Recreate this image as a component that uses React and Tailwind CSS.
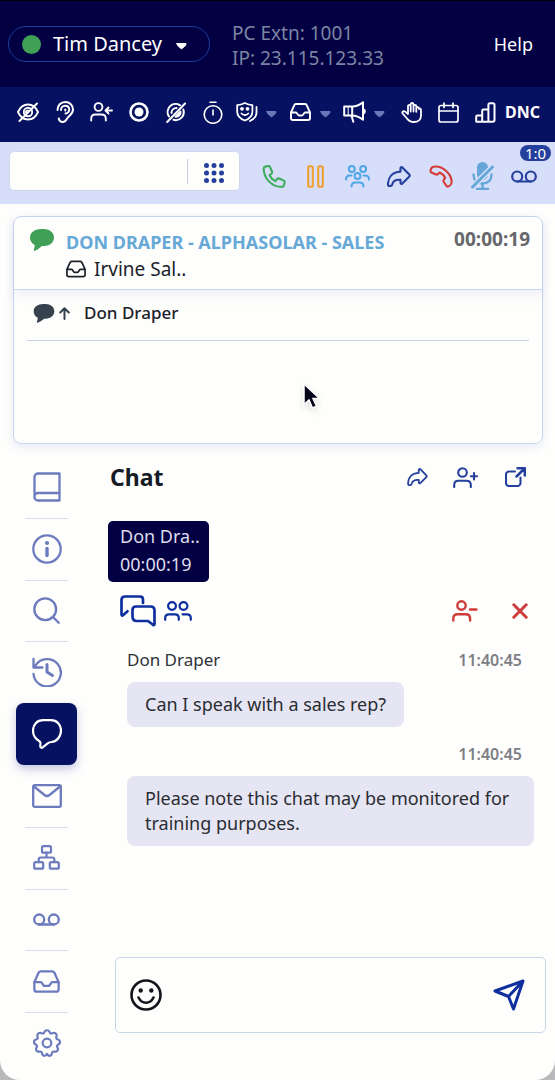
import { useState } from "react";

function Icone({ w, h, traco = 2, className = "", children }) {
  return (
    <svg
      width={w}
      height={h}
      viewBox={`0 0 ${w} ${h}`}
      fill="none"
      stroke="currentColor"
      strokeWidth={traco}
      strokeLinecap="round"
      strokeLinejoin="round"
      className={`shrink-0 ${className}`}
      aria-hidden="true"
    >
      {children}
    </svg>
  );
}

function Seta({ className }) {
  return (
    <Icone w={11} h={8} traco={1} className={className}>
      <path fill="currentColor" d="M1 1.500h9c.4 1.700-2.200 3.800-4.500 5.300C3.200 5.300.6 3.200 1 1.500z" />
    </Icone>
  );
}

function Inbox({ w = 21, h = 18, traco = 1.8 }) {
  return (
    <svg width={w} height={h} viewBox="0 0 21 18" fill="none" stroke="currentColor" strokeWidth={traco} strokeLinejoin="round" strokeLinecap="round" className="shrink-0" aria-hidden="true">
      <path d="M1 9.500v5.500a2 2 0 0 0 2 2h15a2 2 0 0 0 2-2V9.500L16.800 2.400A2 2 0 0 0 15 1H6a2 2 0 0 0-1.800 1.400z" />
      <path d="M1.200 9.500H6c1.200 0 1.500 3 3 3h3c1.500 0 1.800-3 3-3h4.800" />
    </svg>
  );
}

function Compartilhar({ w = 24, h = 21 }) {
  return (
    <svg width={w} height={h} viewBox="0 0 24 21" fill="none" stroke="currentColor" strokeWidth="2.1" strokeLinejoin="round" strokeLinecap="round" aria-hidden="true">
      <path d="M13.500 2.200c0-1 1-1.500 1.800-.8l7 7.200c.6.700.6 1.300 0 2l-7 7c-.8.700-1.800.2-1.800-.8v-3c-4.500-.3-7.500 1-8.200 4.500-.3 1.400-.8 1.700-2 1.700H2.500c-1 0-1.500-.4-1.500-1.500C1 11 5.500 6 13.500 5.600z" />
    </svg>
  );
}

function Correio({ w = 26, traco = 2.2 }) {
  return (
    <Icone w={w} h={13} traco={traco}>
      <circle cx="6.200" cy="6.500" r="5" />
      <circle cx={w - 6.2} cy="6.500" r="5" />
      <path d={`M6 11.500H${w - 6}`} />
    </Icone>
  );
}

const ferramentas = [
  {
    nome: "Hide",
    icone: (
      <Icone w={22} h={20} traco={1.9}>
        <path d="M1 10c2-4.500 5.500-7.500 10-7.500S19 5.500 21 10c-2 4.500-5.500 7.500-10 7.500S3 14.500 1 10z" />
        <circle cx="11" cy="10" r="4.200" />
        <path d="M9 10.500a2 2 0 0 1 2-2" />
        <path d="M2.500 19L20 1.500" />
      </Icone>
    ),
  },
  {
    nome: "Listen",
    icone: (
      <Icone w={18} h={22} traco={2}>
        <path d="M1.500 9C1.500 4.500 4.800 1 9.300 1S17 4.300 17 8.500c0 3-1.500 4.500-3.400 6.200-2 1.800-2.300 2.300-3.400 4.200-1 1.600-2.300 2.300-4 2.100-1.800-.2-3.200-1.500-3.400-3.500" />
        <path d="M5 9c0-2.500 1.800-4.300 4.200-4.300s4 1.600 4 3.900-1.700 3.900-3.700 3.900" />
        <path d="M9.300 8.600v.8" />
      </Icone>
    ),
  },
  {
    nome: "Join",
    icone: (
      <Icone w={23} h={20} traco={1.9}>
        <circle cx="8.500" cy="5" r="3.900" />
        <path d="M1.200 18.500v-1.800c0-2.700 1.600-4.200 4.300-4.200h6c2.700 0 4.300 1.500 4.300 4.200v1.800" />
        <path d="M22 8.500h-6M18.500 5.500l-3 3 3 3" />
      </Icone>
    ),
  },
  {
    nome: "Record",
    icone: (
      <Icone w={20} h={20} traco={2.6}>
        <circle cx="10" cy="10" r="8.500" />
        <circle cx="10" cy="10" r="4.500" fill="currentColor" stroke="none" />
      </Icone>
    ),
  },
  {
    nome: "Stop record",
    icone: (
      <Icone w={20} h={21} traco={2}>
        <path d="M3 14.500A8 8 0 0 1 14 3.300M17.300 7.500A8 8 0 0 1 7.500 17.800" />
        <path d="M14.500 9.500a4.500 4.500 0 0 1-5 5.200z" fill="currentColor" />
        <path d="M5.500 11a5 5 0 0 1 5-5" />
        <path d="M1.200 20L19 1.500" />
      </Icone>
    ),
  },
  {
    nome: "Timer",
    icone: (
      <Icone w={20} h={23} traco={1.6}>
        <circle cx="10" cy="13.500" r="8.800" />
        <path d="M7 1.200h6M10 9v5" />
      </Icone>
    ),
  },
];

const menus = [
  {
    nome: "Mask",
    icone: (
      <Icone w={22} h={20} traco={1.8}>
        <path d="M1.200 3.200C4 3 6.500 2.200 8.800 1c2.300 1.200 4.800 2 7.600 2.200v6.500c0 4.300-3 7-7.600 8.800-4.600-1.800-7.600-4.500-7.600-8.800z" />
        <circle cx="6" cy="6.800" r="1" fill="currentColor" />
        <circle cx="11.500" cy="6.800" r="1" fill="currentColor" />
        <path d="M5.500 11.500c1.800 2 5 2 6.800 0" />
        <path d="M20.500 5v5.500c0 3.500-2.500 6.500-6.500 8.500" />
      </Icone>
    ),
  },
  { nome: "Queues", icone: <Inbox w={21} h={18} traco={1.9} /> },
  {
    nome: "Campaigns",
    icone: (
      <Icone w={23} h={22} traco={2}>
        <path d="M1.200 5.500h8.300c4 0 7.500-2 10.500-4.300v17.600c-3-2.300-6.500-4.300-10.500-4.300H1.200zM9.200 5.500v9M8.500 14.800l1.800 6" />
        <path d="M5.200 5.500v9" strokeWidth="1" />
        <path d="M20.500 8.500c1.800.6 1.800 3.400 0 4z" fill="currentColor" />
      </Icone>
    ),
  },
];

const atalhos = [
  {
    nome: "Raise hand",
    icone: (
      <Icone w={21} h={21} traco={1.8}>
        <path d="M7 11V4.300c0-1.900 2.700-1.900 2.700 0V9.500M9.700 8V2.500c0-2 2.800-2 2.800 0v7M12.500 4.300c0-1.900 2.800-1.900 2.800 0v5.500M15.300 6.500c0-1.800 2.700-1.800 2.700 0v.5c.3-.8 2-.6 2 1v5.500c0 4-3 6.500-7 6.500-3.500 0-5.500-1.300-7-3.500l-4.300-5c-1.200-1.700 1-3.200 2.500-1.900L7 12V4.500" />
      </Icone>
    ),
  },
  {
    nome: "Calendar",
    icone: (
      <Icone w={21} h={21} traco={1.7}>
        <rect x="1" y="3.500" width="19" height="16.500" rx="2" />
        <path d="M1 9h19M6 1v4.500M15 1v4.500" />
      </Icone>
    ),
  },
  {
    nome: "Reports",
    icone: (
      <Icone w={21} h={21} traco={2}>
        <path d="M1.200 19.500v-4.800c0-.8.500-1.200 1.200-1.200h4.800v6.300H2c-.5 0-.8 0-.8-.3zM7.200 19.800V8.800c0-.8.500-1.300 1.200-1.300h5v12.300zM13.400 19.800V3c0-1 .6-1.700 1.600-1.700h2.800c1 0 1.700.7 1.700 1.700v15c0 1.200-.6 1.800-1.700 1.800z" />
      </Icone>
    ),
  },
];

const chamada = [
  {
    nome: "Answer",
    cor: "text-[#3fae5c]",
    icone: (
      <Icone w={24} h={23} traco={2.1}>
        <path d="M3.200 1.600L6 1c1-.2 1.600.2 2 1l2 4.500c.3.800.2 1.400-.4 2L7.500 10.200c1.300 2.700 3.200 4.600 5.900 5.900l1.700-2.100c.6-.7 1.200-.8 2-.5l4.500 2c.9.400 1.200 1 1 2l-.7 2.900c-.2 1-.8 1.500-1.800 1.500C10 21.900 1.700 14 1.700 3.400c0-1 .5-1.600 1.500-1.800z" />
      </Icone>
    ),
  },
  {
    nome: "Hold",
    cor: "text-[#f0a02e]",
    icone: (
      <Icone w={17} h={23} traco={2.1}>
        <rect x="1.200" y="1.200" width="4.600" height="20.600" rx="1.500" />
        <rect x="11.200" y="1.200" width="4.600" height="20.600" rx="1.500" />
      </Icone>
    ),
  },
  {
    nome: "Conference",
    cor: "text-[#4fa5e6]",
    icone: (
      <Icone w={25} h={23} traco={2}>
        <circle cx="6.800" cy="4" r="2.900" />
        <circle cx="18.200" cy="4" r="2.900" />
        <circle cx="12.500" cy="11" r="2.900" />
        <path d="M1 14.500c0-2.700 1.200-4 4-4h1.500M24 14.500c0-2.700-1.200-4-4-4h-1.500M6.500 21.500c0-2.700 1.300-4 4-4h4c2.700 0 4 1.300 4 4" />
      </Icone>
    ),
  },
  { nome: "Transfer", cor: "text-[#24409c]", icone: <Compartilhar /> },
  {
    nome: "Hang up",
    cor: "text-[#d43c36]",
    icone: (
      <Icone w={24} h={23} traco={2.1}>
        <path d="M1.500 5.500C1.800 3.500 2.500 2.400 4.500 1.800 13 .2 23 8.500 22.600 17.500c-.2 2-1.200 3.100-2.900 3.900-1 .5-1.800.2-2.400-.7l-2.500-3.700c-.5-.8-.5-1.500 0-2.200l1.400-2.100c-1.300-2.500-3-4.100-5.500-5.200L8.800 9.100c-.7.600-1.400.6-2.200.2L2.400 7.500c-.8-.4-1.100-1-.9-2z" />
      </Icone>
    ),
  },
  {
    nome: "Mute",
    cor: "text-[#67a6d8]",
    icone: (
      <Icone w={23} h={28} traco={2}>
        <rect x="7" y="1" width="9" height="16" rx="4.500" fill="currentColor" />
        <path d="M2.500 12.500c0 5.500 3.500 9 9 9s9-3.500 9-9M11.500 22v4.500M6 27h11" strokeWidth="2.400" />
        <path d="M1 25.500L22 4.500" stroke="#d6defa" strokeWidth="6" />
        <path d="M1.500 25L21.500 5" strokeWidth="3" />
      </Icone>
    ),
  },
  { nome: "Voicemail", cor: "text-[#24409c]", icone: <Correio />, aviso: "1:0" },
];

const secoes = [
  {
    nome: "Directory",
    icone: (
      <Icone w={28} h={30} traco={2.3}>
        <path d="M26.500 1.500H5A3.500 3.500 0 0 0 1.500 5v20A3.500 3.500 0 0 0 5 28.500h21.500zM26.500 21H5a3.500 3.500 0 0 0-3.500 3.500" />
      </Icone>
    ),
  },
  {
    nome: "Info",
    icone: (
      <Icone w={30} h={30} traco={2.3}>
        <circle cx="15" cy="15" r="13.700" />
        <path d="M15 14.500v7" strokeWidth="3.400" />
        <circle cx="15" cy="9" r="2.100" fill="currentColor" stroke="none" />
      </Icone>
    ),
  },
  {
    nome: "Search",
    icone: (
      <Icone w={27} h={27} traco={2.3}>
        <circle cx="12.200" cy="12.200" r="10.900" />
        <path d="M20 20l5.700 5.700" />
      </Icone>
    ),
  },
  {
    nome: "History",
    icone: (
      <Icone w={30} h={30} traco={2.3}>
        <path d="M1.500 17a13.700 13.700 0 1 0 2.200-8.800L1.500 10.500M1.500 2v8.500h9" />
        <path d="M15 7.500v7.500l5.500 3.500" strokeWidth="3" />
      </Icone>
    ),
  },
  {
    nome: "Chat",
    icone: (
      <Icone w={30} h={30} traco={2.2}>
        <path d="M11 1.200h8c6 0 10 4.500 10 10.300s-4 11-9.500 11.500c-1.500.1-2.500.3-3.500 1.200L11 28.200c-1.500 1.200-2.800.4-2.700-1.300l.2-2.700c0-1-.3-1.500-1.100-2C3.500 20 1 16.500 1 11.500 1 5.700 5 1.200 11 1.200z" />
      </Icone>
    ),
  },
  {
    nome: "Email",
    icone: (
      <Icone w={30} h={24} traco={2.3}>
        <rect x="1.200" y="1.200" width="27.600" height="21.600" rx="1.500" />
        <path d="M2 2.500L12.500 11c1.700 1.300 3.300 1.300 5 0L28 2.500" />
      </Icone>
    ),
  },
  {
    nome: "Flow",
    icone: (
      <Icone w={27} h={25} traco={2.2}>
        <rect x="9" y="1.200" width="9" height="6.500" rx="1.500" />
        <rect x="1.200" y="17.200" width="9" height="6.500" rx="1.500" />
        <rect x="16.800" y="17.200" width="9" height="6.500" rx="1.500" />
        <path d="M13.500 7.700v4.800M5.700 17.200v-2.700c0-1.300.7-2 2-2h11.600c1.300 0 2 .7 2 2v2.700" />
      </Icone>
    ),
  },
  { nome: "Voicemail", icone: <Correio w={27} traco={2.3} /> },
  { nome: "Inbox", icone: <Inbox w={27} h={23} traco={1.8} /> },
  {
    nome: "Settings",
    icone: (
      <Icone w={28} h={28} traco={2.2}>
        <circle cx="14" cy="14" r="4.300" />
        <path d="M11.500 2.800C12.300.7 15.700.7 16.500 2.800c.6 1.700 1.700 2.100 3.200 1.300 2.200-1.100 4.600 1.200 3.800 3.300-.6 1.600 0 2.700 1.500 3.100 2.400.7 2.700 3.800.4 4.900-1.500.7-1.800 1.900-.9 3.200 1.300 2-.5 4.500-2.800 4-1.700-.3-2.700.4-2.800 2-.2 2.300-3.200 3-4.400 1-.3-.9-.7-1-1-.1-1.200 2.100-4.200 1.400-4.400-.9-.1-1.600-1.100-2.300-2.800-2-2.300.5-4.100-2-2.800-4 .9-1.300.6-2.500-.9-3.200C.3 14.300.6 11.200 3 10.500c1.500-.4 2.100-1.500 1.500-3.100C3.700 5.300 6.100 3 8.300 4.100c1.500.8 2.600.4 3.200-1.300z" />
      </Icone>
    ),
  },
];

const mensagens = [
  { autor: "Don Draper", hora: "11:40:45", texto: "Can I speak with a sales rep?" },
  { autor: "", hora: "11:40:45", texto: "Please note this chat may be monitored for training purposes." },
];

function Balao({ w, h, className }) {
  return (
    <svg width={w} height={h} viewBox="0 0 24 22" fill="currentColor" className={`shrink-0 ${className}`} aria-hidden="true">
      <path d="M11 0h3c5.500 0 10 3.500 10 8.500S19.500 17 14 17h-2c-2 1.800-4.600 3.800-7.500 4.800-.8.200-1-.3-.8-.9.700-1.700.9-3 1-4.900C2 14.600 0 12 0 8.500 0 3.500 5 0 11 0z" />
    </svg>
  );
}

export default function App() {
  const [secao, setSecao] = useState("Chat");
  const [numero, setNumero] = useState("");
  const [texto, setTexto] = useState("");

  return (
    <div className="bg-[#b9b9bb]">
      <main className="min-h-screen flex flex-col bg-[#fefefd] rounded-b-[20px] overflow-hidden font-['Noto_Sans',sans-serif] text-[18px] text-[#1c212b]">
        <header className="h-[87px] border-t border-black bg-[#020042] flex items-center pl-2 pr-[22px]">
          <button className="h-9 w-[202px] flex items-center rounded-full border border-[#1f3c9a] px-[13px] text-white text-[20px]">
            <span className="w-[19px] h-[19px] rounded-full bg-[#40a156]"></span>
            <span className="ml-3">Tim Dancey</span>
            <Seta className="ml-[14px] mt-1" />
          </button>
          <div className="ml-[22px] pt-[3px] flex-1 text-[#7c84a3] text-[19px] leading-[25px]">
            <p>PC Extn: 1001</p>
            <p>IP: 23.115.123.33</p>
          </div>
          <a href="#help" className="text-white">Help</a>
        </header>

        <nav className="h-[55px] pb-[5px] bg-[#061161] text-white flex items-center pl-[9px] pr-[14px]">
          {ferramentas.map((f) => (
            <button key={f.nome} aria-label={f.nome} className="flex-[37] min-w-0 h-9 flex items-center justify-center">
              {f.icone}
            </button>
          ))}
          {menus.map((m) => (
            <button key={m.nome} aria-label={m.nome} className="flex-[54] min-w-0 h-9 flex items-center">
              <span className="w-[23px] ml-1 mr-2 flex justify-center">{m.icone}</span>
              <Seta className="text-[#6a77b8] mt-1" />
            </button>
          ))}
          {atalhos.map((a) => (
            <button key={a.nome} aria-label={a.nome} className="flex-[37] min-w-0 h-9 flex items-center justify-center">
              {a.icone}
            </button>
          ))}
          <button className="flex-[37] min-w-0 h-9 flex items-center justify-center font-['Liberation_Sans_Narrow','Noto_Sans',sans-serif] font-bold text-[16px]">
            DNC
          </button>
        </nav>

        <div className="h-[62px] bg-[#d6defa] flex items-start pt-2 pl-[9px] pr-[10px]">
          <div className="mt-px h-10 w-[231px] bg-[#fefefd] border border-[#cfd8ea] rounded-[5px] flex items-center">
            <input
              aria-label="Number"
              value={numero}
              onChange={(e) => setNumero(e.target.value)}
              className="flex-1 min-w-0 h-full px-3 outline-none"
            />
            <span className="w-px h-[25px] bg-[#c5cbe0]"></span>
            <button aria-label="Keypad" className="w-[51px] h-full pt-1 flex items-center justify-center text-[#24409c]">
              <svg width="20" height="20" viewBox="0 0 20 20" fill="currentColor" aria-hidden="true">
                {[2.5, 10, 17.5].map((y) => [2.5, 10, 17.5].map((x) => <circle key={`${x}-${y}`} cx={x} cy={y} r="2.500" />))}
              </svg>
            </button>
          </div>
          <div className="flex-1 flex ml-[13px]">
            {chamada.map((c) => (
              <button key={c.nome} aria-label={c.nome} className={`relative flex-1 h-[52px] flex items-center justify-center ${c.cor}`}>
                {c.icone}
                {c.aviso && (
                  <span className="absolute -top-[5px] -right-[6px] w-[31px] h-4 rounded-full bg-[#24409c] text-white text-[15px] leading-4 text-center">
                    {c.aviso}
                  </span>
                )}
              </button>
            ))}
          </div>
        </div>

        <section className="relative mt-3 mr-3 ml-[13px] h-[228px] border border-[#c9d6ef] rounded-lg shadow-[0_3px_10px_rgba(80,90,180,0.12)]">
          <div className="h-[73px] flex items-start pt-3 pl-4 pr-3 border-b border-[#c9d6ef] shadow-[0_6px_10px_rgba(80,90,180,0.08)]">
            <Balao w={24} h={22} className="text-[#40a156]" />
            <div className="flex-1 min-w-0 ml-3">
              <h2 className="font-bold text-[#66a8d6] leading-[26px] whitespace-nowrap">DON DRAPER - ALPHASOLAR - SALES</h2>
              <p className="flex items-center gap-2 text-[19px] leading-[28px]">
                <Inbox w={20} h={18} />
                Irvine Sal..
              </p>
            </div>
            <time className="font-bold text-[19px] leading-5 text-[#67676b]">00:00:19</time>
          </div>
          <div className="mx-[13px] h-[51px] pb-1 flex items-center border-b border-[#c6d0e6] pl-[6px]">
            <Balao w={22} h={19} className="text-[#36434f]" />
            <Icone w={11} h={13} traco={2} className="ml-1 text-[#36434f]">
              <path d="M5.500 12V1.500M1.200 5.500l4.300-4.300 4.300 4.300" />
            </Icone>
            <span className="ml-[14px] text-[17px] font-medium">Don Draper</span>
          </div>
          <svg width="20" height="30" viewBox="0 0 20 30" className="absolute left-[288px] top-[165px] drop-shadow-md" aria-hidden="true">
            <path d="M2 2v20.500l5-4.500 3.500 8 4-1.800-3.500-7.700h6.500z" fill="#05051a" stroke="#fff" strokeWidth="1.500" />
          </svg>
        </section>

        <div className="flex-1 flex pt-3">
          <nav className="w-[61px] ml-4 pb-[6px] flex flex-col">
            {secoes.map((s, i) => {
              const ativa = s.nome === secao;
              const proxima = secoes[i + 1];
              const linha = !ativa && proxima && proxima.nome !== secao;
              return (
                <button
                  key={s.nome}
                  aria-label={s.nome}
                  onClick={() => setSecao(s.nome)}
                  className={`relative flex-1 min-h-[52px] flex items-center justify-center ${
                    ativa ? "bg-[#061161] text-white rounded-lg shadow-[0_4px_10px_rgba(60,70,160,0.3)]" : "text-[#6c7bbd]"
                  }`}
                >
                  {s.icone}
                  {linha && <span className="absolute -bottom-px inset-x-[9px] h-px bg-[#d9def1]"></span>}
                </button>
              );
            })}
          </nav>

          <section className="flex-1 min-w-0 flex flex-col pl-[31px] pb-[47px]">
            <div className="flex items-center h-[42px] pl-[2px] pr-[29px] text-[#24409c]">
              <h1 className="flex-1 text-[23px] font-bold text-[#151a24]">Chat</h1>
              <button aria-label="Transfer chat">
                <Compartilhar w={21} h={18} />
              </button>
              <button aria-label="Add person" className="ml-[25px]">
                <Icone w={25} h={21} traco={2.1}>
                  <circle cx="9.500" cy="5.500" r="4.300" />
                  <path d="M1.200 20v-2c0-2.800 1.500-4.300 4.300-4.300h8c2.800 0 4.300 1.500 4.300 4.300v2M21 6v6.500M17.800 9.300H24" />
                </Icone>
              </button>
              <button aria-label="Open in window" className="ml-[27px]">
                <Icone w={21} h={20} traco={2.1}>
                  <path d="M10 4.500H4a3 3 0 0 0-3 3V16a3 3 0 0 0 3 3h8.500a3 3 0 0 0 3-3v-5.500" />
                  <path d="M12.500 1.200h7.300v7.300M19.500 1.500l-8 8" strokeWidth="2.500" />
                </Icone>
              </button>
            </div>

            <button className="mt-[23px] w-[101px] h-[61px] pb-[3px] rounded-[5px] bg-[#020042] text-[#dcdcea] text-left pl-3 leading-[28px] whitespace-nowrap">
              Don Dra..
              <br />
              00:00:19
            </button>

            <div className="mt-[11px] h-9 pl-3 pr-[27px] flex items-center text-[#0f2f9f]">
              <button aria-label="Conversation">
                <Icone w={36} h={32} traco={2.7}>
                  <path d="M23 8V4.500c0-2-1.200-3-3-3H5c-2.300 0-3.500 1.200-3.500 3.500v14.500c0 1 .8 1.300 1.500.7l4.500-4" />
                  <path d="M16 11.500h14.500c2.500 0 4 1.500 4 4V29c0 1-.8 1.300-1.500.8l-5-3.800H17c-3 0-4.500-1.500-4.500-4.500V15c0-2.300 1.200-3.500 3.500-3.500z" />
                </Icone>
              </button>
              <button aria-label="Participants" className="ml-2">
                <Icone w={28} h={20} traco={2.2}>
                  <circle cx="8" cy="5" r="3.900" />
                  <circle cx="19.500" cy="5" r="3.900" />
                  <path d="M1.200 18.800v-1.600c0-2.500 1.300-3.900 3.800-3.900h6c2.500 0 3.800 1.400 3.800 3.900v1.600M18.500 13.300H23c2.500 0 3.800 1.400 3.800 3.900v1.600" />
                </Icone>
              </button>
              <div className="ml-auto flex items-center text-[#cf3d3a]">
                <button aria-label="Remove person">
                  <Icone w={26} h={22} traco={2.4}>
                    <circle cx="9.500" cy="5.500" r="4.200" />
                    <path d="M1.300 20.500v-2c0-2.800 1.500-4.300 4.300-4.300h8.200c2.800 0 4.300 1.500 4.300 4.300v2M18 9.500h6.500" />
                  </Icone>
                </button>
                <button aria-label="Close chat" className="ml-[34px]">
                  <Icone w={16} h={16} traco={3}>
                    <path d="M1.800 1.800l12.400 12.400M14.200 1.800L1.800 14.200" />
                  </Icone>
                </button>
              </div>
            </div>

            <div className="pl-[19px] pr-[21px]">
              {mensagens.map((m, i) => (
                <article key={i} className={i === 0 ? "mt-[17px]" : "mt-[13px]"}>
                  <div className="flex items-center h-7 pr-3 leading-7">
                    <span className="text-[17px] text-[#2e3136]">{m.autor}</span>
                    <time className="ml-auto text-[16px] font-semibold text-[#7e7f84]">{m.hora}</time>
                  </div>
                  <p className="mt-2 w-fit rounded-lg bg-[#e6e5f4] px-[18px] py-[10px] leading-[25px] text-[#2a2d31]">{m.texto}</p>
                </article>
              ))}
            </div>

            <form
              className="mt-auto ml-[7px] mr-[9px] h-[76px] rounded-[5px] border border-[#c9d5ea] flex items-center pl-[14px] pr-5"
              onSubmit={(e) => e.preventDefault()}
            >
              <button type="button" aria-label="Emoji" className="text-[#12151c]">
                <Icone w={32} h={32} traco={2.6}>
                  <circle cx="16" cy="16" r="14.500" />
                  <circle cx="10.700" cy="11.500" r="2.200" fill="currentColor" stroke="none" />
                  <circle cx="21.300" cy="11.500" r="2.200" fill="currentColor" stroke="none" />
                  <path d="M8.500 18.500c3.500 7 11.500 7 15 0" />
                </Icone>
              </button>
              <input
                aria-label="Message"
                value={texto}
                onChange={(e) => setTexto(e.target.value)}
                className="flex-1 min-w-0 h-full px-3 outline-none"
              />
              <button aria-label="Send" className="text-[#0f2f9f]">
                <Icone w={32} h={32} traco={3}>
                  <path d="M30 2L2 12l13.500 5.500L20.500 30zM30 2L15.500 17.500" />
                </Icone>
              </button>
            </form>
          </section>
        </div>
      </main>
    </div>
  );
}
